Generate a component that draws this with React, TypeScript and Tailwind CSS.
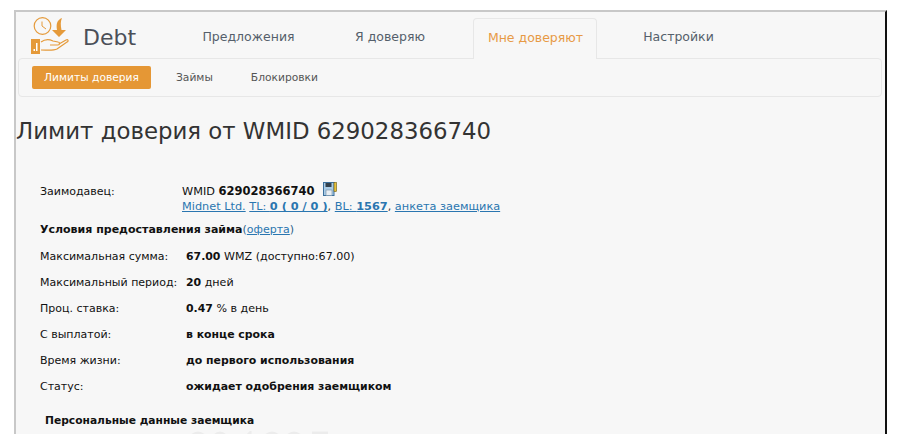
const tabs = [
  { label: 'Предложения', w: 'w-[124px] pl-[1px]' },
  { label: 'Я доверяю', w: 'w-[132px] ml-[14px]' },
  { label: 'Мне доверяют', w: 'w-[124px] ml-[17px] pl-[1px]', active: true },
  { label: 'Настройки', w: 'w-[162px] pl-[1px]' },
]

const rows = [
  { label: 'Максимальная сумма:', value: <><b className="text-[10.9px]">67.00</b> WMZ (доступно:67.00)</> },
  { label: 'Максимальный период:', value: <><b className="text-[10.9px]">20</b> дней</> },
  { label: 'Проц. ставка:', value: <><b className="text-[10.9px]">0.47</b> % в день</> },
  { label: 'С выплатой:', value: <b className="text-[10.9px]">в конце срока</b> },
  { label: 'Время жизни:', value: <b className="text-[10.9px]">до первого использования</b> },
  { label: 'Статус:', value: <b className="text-[10.9px]">ожидает одобрения заемщиком</b> },
]

function Logo() {
  return (
    <svg width="40" height="40" viewBox="0 0 40 40" fill="none" stroke="#e59a3a" strokeWidth="1.2">
      <circle cx="11.5" cy="9" r="8.3" />
      <path d="M11 4.5 L11 9 L15 12" strokeWidth="1" />
      <path d="M31 1 C26 3 25 7 26 13 L21 13 L28 20 L35 13 L30.5 13 C29.5 8 29.5 4 31 1 Z" fill="#e59a3a" stroke="none" />
      <rect x="0" y="22" width="9" height="15" fill="#e59a3a" stroke="none" />
      <rect x="5" y="26" width="1.5" height="8" fill="#fff" stroke="none" />
      <rect x="2.5" y="32" width="1.5" height="2" fill="#fff" stroke="none" />
      <path d="M10 25 C14 22 18 22 22 24 L27 25 C29 25 29 28 27 28 L19 28 M28 27 L35 23 C37 22 38 24 36 25 L26 32 C22 34 16 33 10 33" />
    </svg>
  )
}

function FloppyIcon() {
  return (
    <svg width="14" height="15" viewBox="0 0 14 15">
      <rect x="0.5" y="0.5" width="10.5" height="13" fill="#a9cbe6" stroke="#3b6f9c" />
      <rect x="2.5" y="1" width="6" height="4" fill="#33414d" />
      <rect x="3" y="8" width="6" height="5.5" fill="#e8eef3" stroke="#6d8aa3" strokeWidth="0.6" />
      <rect x="11" y="0.5" width="2.5" height="9" fill="#e8c23c" stroke="#6b5a12" strokeWidth="0.6" />
    </svg>
  )
}

// faint top edge of the picture that is cut off by the window
function FadedPicture() {
  return (
    <svg width="140" height="6" viewBox="0 0 140 6" fill="none" stroke="#ececec" strokeWidth="3">
      <ellipse cx="8" cy="10" rx="8" ry="8" />
      <ellipse cx="30" cy="10" rx="7" ry="8" />
      <path d="M52 10 L60 2 L60 10" />
      <ellipse cx="82" cy="10" rx="8" ry="8" />
      <ellipse cx="104" cy="10" rx="8" ry="8" />
      <path d="M122 2 L138 2" />
    </svg>
  )
}

export default function App() {
  return (
    <div className="h-[434px] overflow-hidden bg-white pl-[14px] pt-[10px] font-['DejaVu_Sans',sans-serif]">
      <div className="h-[424px] w-[873px] border-t-2 border-l-2 border-r-[2px] border-t-[#c8c8c8] border-l-[#c8c8c8] border-r-[#111] bg-[#f7f7f7]">
        <header className="flex h-[46px]">
          <div className="flex w-[170px] pl-[15px] pt-[5px]">
            <Logo />
            <span className="ml-[12px] mt-[1px] text-[22px] leading-[40px] text-[#4b4f58]">Debt</span>
          </div>
          <nav className="flex pt-[6px]">
            {tabs.map((t) => (
              <a
                key={t.label}
                className={`${t.w} h-[41px] text-center text-[12.5px] leading-[38px] ${
                  t.active
                    ? 'relative z-10 rounded-t border border-b-0 border-[#e7e7e7] bg-[#f7f7f7] text-[#e79a45]'
                    : 'text-[#555f6b]'
                }`}
              >
                {t.label}
              </a>
            ))}
          </nav>
        </header>

        <div className="ml-[2px] mr-[3px] flex h-[39px] items-center rounded border border-[#e7e7e7] pl-[13px] text-[10.7px] text-[#555]">
          <a className="flex h-[23px] w-[119px] items-center justify-center rounded-[2px] bg-[#e59735] pt-[1px] text-white">Лимиты доверия</a>
          <a className="ml-[25px] pt-[1px]">Займы</a>
          <a className="ml-[38px] pt-[1px]">Блокировки</a>
        </div>

        <h1 className="mt-[18px] text-[22.85px] leading-[32px] text-[#333]">Лимит доверия от WMID 629028366740</h1>

        <section className="mt-[36px] pl-[24px] text-[11px] leading-[15px] text-[#111]">
          <div className="flex">
            <div className="w-[142px] pt-[1px]">Заимодавец:</div>
            <div className="text-[11.3px]">
              <div className="flex items-start">
                <span className="pt-[1px]">WMID <b className="text-[11.5px]">629028366740</b></span>
                <span className="ml-[8px] -mt-[1px]"><FloppyIcon /></span>
              </div>
              <div className="text-[#2a76b0]">
                <u>Midnet Ltd.</u> <u>TL: <b>0 ( 0 / 0 )</b></u><span className="text-[#333]">,</span> <u>BL: <b>1567</b></u><span className="text-[#333]">,</span> <u>анкета заемщика</u>
              </div>
            </div>
          </div>
          <div className="mt-[8px] font-bold">
            Условия предоставления займа<span className="font-normal text-[#2a5f8a]">(<u className="text-[#2a76b0]">оферта</u>)</span>
          </div>
          <div className="mt-[6px] text-[11.1px]">
            {rows.map((r) => (
              <div key={r.label} className="flex h-[26px] items-center">
                <div className="w-[146px] text-[11px]">{r.label}</div>
                <div>{r.value}</div>
              </div>
            ))}
          </div>
          <div className="ml-[5px] mt-[14px] text-[10.7px] font-bold">Персональные данные заемщика</div>
          <div className="ml-[150px] mt-[3px]"><FadedPicture /></div>
        </section>
      </div>
    </div>
  )
}
